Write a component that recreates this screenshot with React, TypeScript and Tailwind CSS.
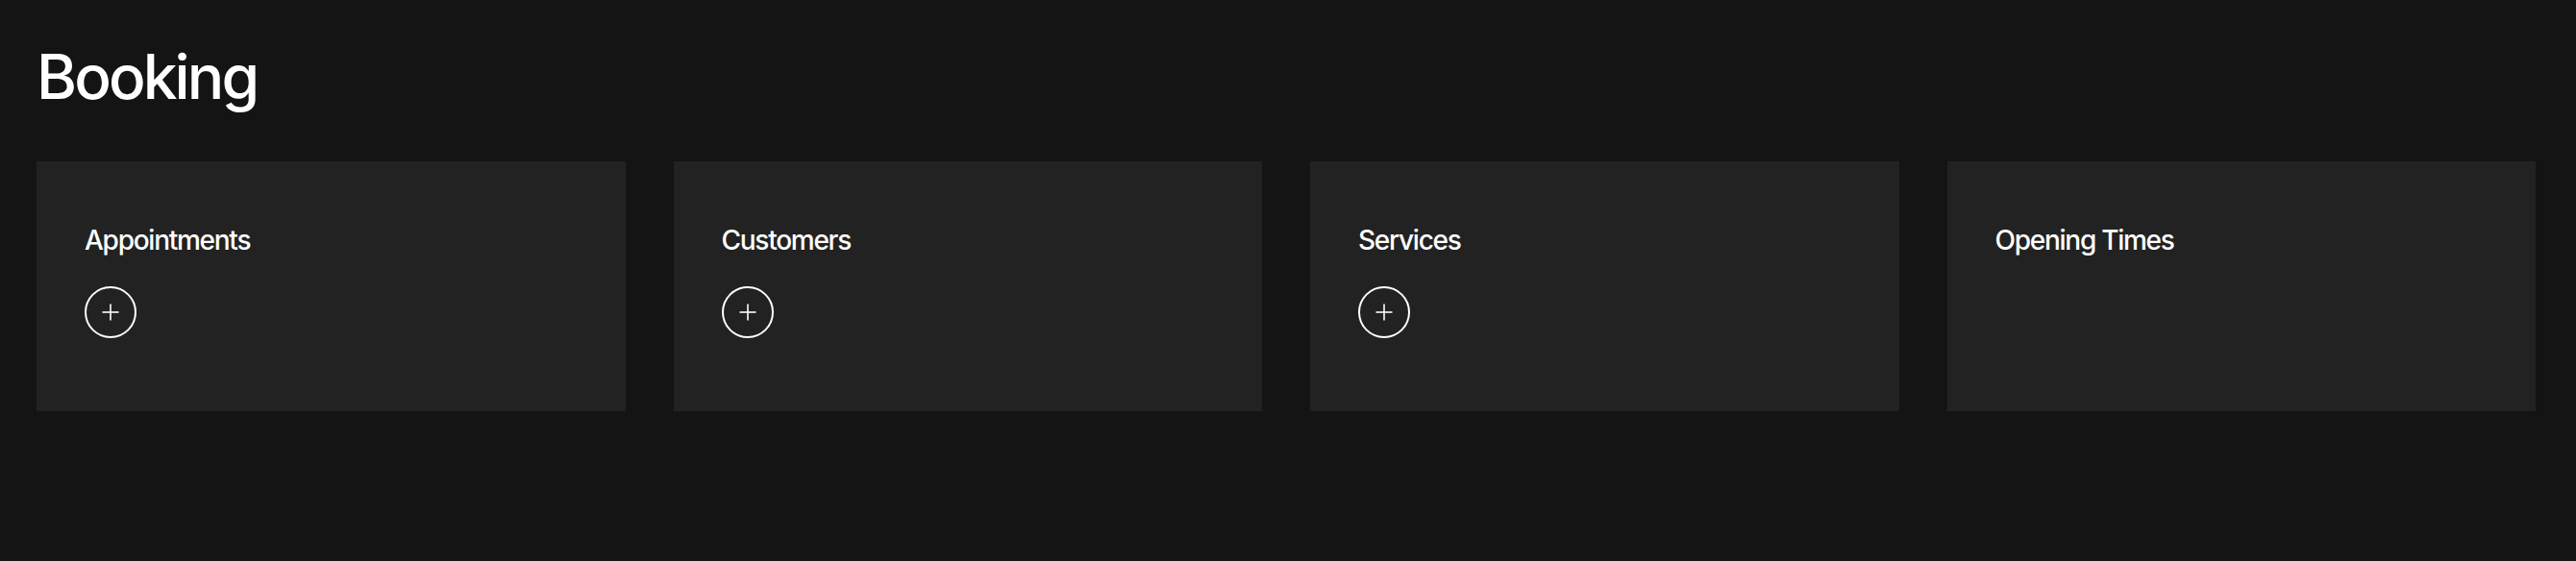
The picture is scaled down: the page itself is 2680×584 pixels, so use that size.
import React from "react";

const SECTIONS = [
  { id: "appointments", title: "Appointments", canAdd: true },
  { id: "customers", title: "Customers", canAdd: true },
  { id: "services", title: "Services", canAdd: true },
  { id: "opening-times", title: "Opening Times", canAdd: false },
];

function AddButton({ label }: { label: string }) {
  return (
    <button
      type="button"
      aria-label={`Add ${label}`}
      className="w-[54px] h-[54px] rounded-full border-2 border-white flex items-center justify-center text-white"
    >
      <svg width="18" height="18" viewBox="0 0 18 18" fill="none" stroke="currentColor" strokeWidth="1.6">
        <line x1="9" y1="0.5" x2="9" y2="17.5" />
        <line x1="0.5" y1="9" x2="17.5" y2="9" />
      </svg>
    </button>
  );
}

export default function App() {
  return (
    <div className="min-h-screen bg-[#141414] text-white font-['Inter',sans-serif] pl-[38px] pr-[42px] pt-[48px]">
      {/* Page header */}
      <h1 className="text-[64px] leading-none font-medium tracking-[-0.045em]">Booking</h1>

      {/* Section cards */}
      <div className="grid grid-cols-4 gap-[50px] mt-[56px]">
        {SECTIONS.map((section) => (
          <div key={section.id} className="bg-[#222222] h-[260px] pl-[50px] pr-[50px] pt-[68px]">
            <h2 className="text-[28px] leading-none font-medium tracking-[-0.045em]">{section.title}</h2>
            {section.canAdd && (
              <div className="mt-[34px]">
                <AddButton label={section.title} />
              </div>
            )}
          </div>
        ))}
      </div>
    </div>
  );
}
